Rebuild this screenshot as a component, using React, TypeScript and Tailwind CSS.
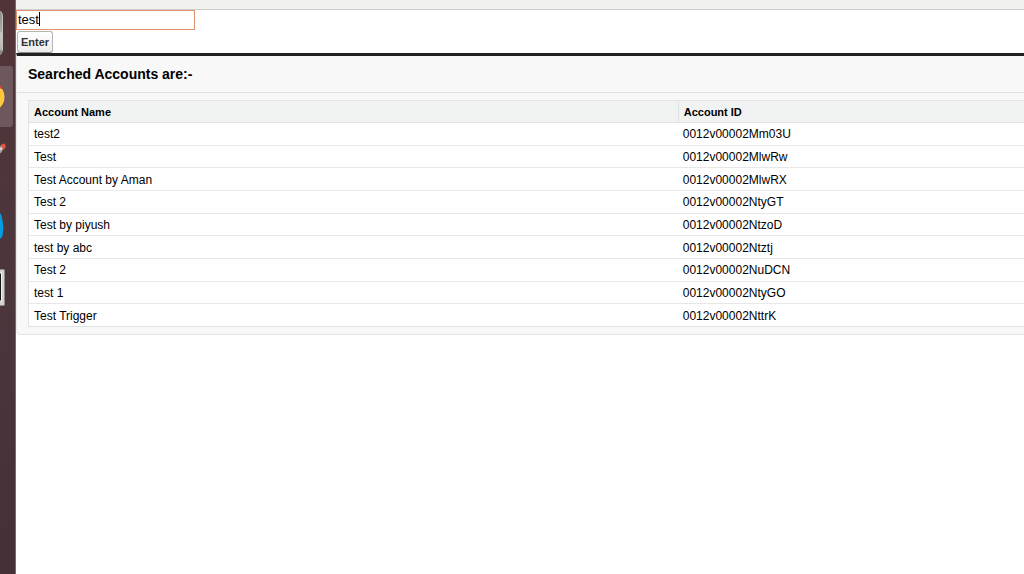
import { useState } from "react";

type Account = { name: string; id: string };

const accounts: Account[] = [
  { name: "test2", id: "0012v00002Mm03U" },
  { name: "Test", id: "0012v00002MlwRw" },
  { name: "Test Account by Aman", id: "0012v00002MlwRX" },
  { name: "Test 2", id: "0012v00002NtyGT" },
  { name: "Test by piyush", id: "0012v00002NtzoD" },
  { name: "test by abc", id: "0012v00002Ntztj" },
  { name: "Test 2", id: "0012v00002NuDCN" },
  { name: "test 1", id: "0012v00002NtyGO" },
  { name: "Test Trigger", id: "0012v00002NttrK" },
];

function Launcher() {
  return (
    <aside className="flex w-4 shrink-0 flex-col overflow-hidden border-r border-[#77696d] bg-linear-to-b from-[#513438] via-[#4b363c] to-[#433137]">
      <svg width="15" height="320" viewBox="0 0 15 320" aria-hidden="true">
        <defs>
          <linearGradient id="drive" x1="0" y1="0" x2="0" y2="1">
            <stop offset="0" stopColor="#8d8d8b" />
            <stop offset="0.6" stopColor="#b4b4b1" />
            <stop offset="1" stopColor="#777573" />
          </linearGradient>
        </defs>
        <path d="M-5 11H-1Q2 11 2.5 16V49Q2 55-2 55H-5Z" fill="url(#drive)" stroke="#c4c1bf" strokeWidth="1" />
        <path d="M0 31L2 33V49L0 51Z" fill="#d0d0ce" opacity=".6" />
        <path d="M0 55L2 52" stroke="#8d7d7c" />
        <rect x="-6" y="66" width="19" height="61" rx="3" fill="#6d585d" />
        <circle cx="-10" cy="97" r="14.5" fill="#ffc83d" />
        <path d="M-2 84Q1 85 2 89L-2 88Z" fill="#e94335" />
        <path d="M-2 150L1 145L4 148L1 153L-2 154Z" fill="#a4a39b" />
        <path d="M1 145Q4 142 5.500 145V148L3 150L2 147Z" fill="#e45343" />
        <path d="M-1 150L2 148" stroke="#e8e6df" strokeWidth="1.500" />
        <path d="M-4 211Q1 211 2 218Q4 227 3 232Q3 239-3 240Z" fill="#079cdd" />
        <rect x="-6" y="269.500" width="10.500" height="36" rx="1" fill="#d4d2cf" stroke="#8e8987" />
        <rect x="-6" y="273" width="7.500" height="28" fill="#171617" stroke="#f3f3f1" />
      </svg>
    </aside>
  );
}

export default function App() {
  const [query, setQuery] = useState("test");

  return (
    <div className="flex min-h-screen overflow-hidden bg-white font-['Liberation_Sans',Arial,sans-serif] text-black">
      <Launcher />
      <main className="min-w-0 flex-1">
        <div className="h-[10px] border-b border-[#cfcecb] bg-[#f1f1f0]" />
        <form onSubmit={(e) => e.preventDefault()}>
          <div className="relative w-[179px]">
            <input
              type="text"
              aria-label="Search accounts"
              value={query}
              onChange={(e) => setQuery(e.target.value)}
              className="block h-5 w-full border border-[#dc9470] bg-white px-px pb-0.5 text-[13px] leading-4 caret-transparent outline-none"
            />
            <span className="absolute top-[2px] left-[23px] h-[14px] w-px bg-black" />
          </div>
          <button
            type="submit"
            className="mt-px ml-px block h-[22px] rounded-[3px] border border-[#b5b5b5] border-b-[#8c8c8c] bg-linear-to-b from-white to-[#ededed] px-[3px] pb-px text-[11px] leading-4 font-bold text-[#333]"
          >
            Enter
          </button>
        </form>
        <section className="rounded-bl-[4px] border-t-[3px] border-b border-l border-t-[#222] border-b-[#e4e4e4] border-l-[#eaeaea] bg-[#f8f8f8] pb-[7px]">
          <h2 className="border-b border-[#e3e3e3] px-[11px] py-2 text-[14px] leading-5 font-bold">
            Searched Accounts are:-
          </h2>
          <div className="pt-[7px] pl-[11px]">
            <table className="h-[227px] w-full table-fixed border-separate border-spacing-0 border border-r-0 border-[#e0e3e5] bg-white text-left">
              <colgroup>
                <col className="w-[65.200%]" />
                <col />
              </colgroup>
              <thead>
                <tr className="bg-[#f1f3f3] text-[11px] leading-4">
                  <th className="border-b border-[#e0e3e5] px-[5px] pt-[3px] pb-[2px] font-bold">Account Name</th>
                  <th className="border-b border-l border-[#e0e3e5] px-[5px] pt-[3px] pb-[2px] font-bold">Account ID</th>
                </tr>
              </thead>
              <tbody className="text-[12px] leading-4">
                {accounts.map((a) => (
                  <tr key={a.id} className="group">
                    <td className="border-b border-[#e8e8e8] px-[5px] pt-[3px] pb-[2px] group-last:border-b-0">{a.name}</td>
                    <td className="border-b border-[#e8e8e8] px-[5px] pt-[3px] pb-[2px] group-last:border-b-0">{a.id}</td>
                  </tr>
                ))}
              </tbody>
            </table>
          </div>
        </section>
      </main>
    </div>
  );
}
